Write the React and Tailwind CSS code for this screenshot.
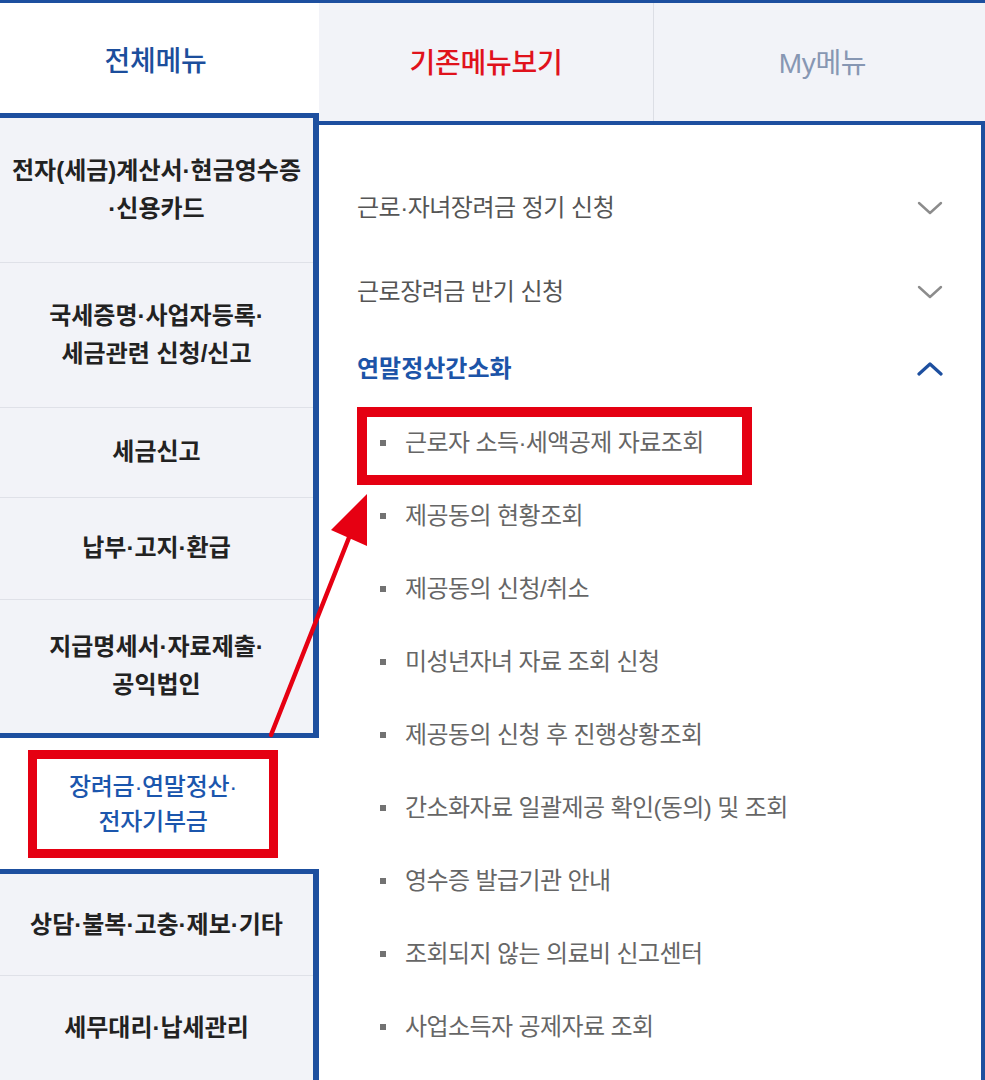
import React from "react";

function LeftItem({ lines, h, last }) {
  return (
    <div
      className={`flex flex-col items-center justify-center text-center text-[24px] font-bold tracking-[0px] leading-[38px] text-[#222222] ${
        last ? "" : "border-b border-[#dfe1e8]"
      } ${h}`}
    >
      {lines.map((l, i) => (
        <div key={i}>{l}</div>
      ))}
    </div>
  );
}

function ChevronDown() {
  return (
    <svg width="26" height="14" viewBox="0 0 26 14" className="shrink-0">
      <polyline points="2,2 13,12 24,2" fill="none" stroke="#8c8c8c" strokeWidth="2.4" strokeLinecap="round" strokeLinejoin="round" />
    </svg>
  );
}

function ChevronUp() {
  return (
    <svg width="26" height="14" viewBox="0 0 26 14" className="shrink-0">
      <polyline points="2,12 13,2 24,12" fill="none" stroke="#1d4f9f" strokeWidth="3.2" strokeLinecap="round" strokeLinejoin="round" />
    </svg>
  );
}

const subItems = [
  "근로자 소득·세액공제 자료조회",
  "제공동의 현황조회",
  "제공동의 신청/취소",
  "미성년자녀 자료 조회 신청",
  "제공동의 신청 후 진행상황조회",
  "간소화자료 일괄제공 확인(동의) 및 조회",
  "영수증 발급기관 안내",
  "조회되지 않는 의료비 신고센터",
  "사업소득자 공제자료 조회",
];

export default function App() {
  return (
    <div className="relative flex w-[985px] h-[1080px] overflow-hidden bg-white border-t-[3px] border-[#1d4f9f] font-['Liberation_Sans','Noto_Sans_CJK_KR',sans-serif]">
      {/* Left column */}
      <div className="flex w-[319px] shrink-0 flex-col">
        <div className="flex h-[110px] items-center justify-center pt-[8px] pr-[8px] text-[28px] font-medium tracking-[-0.3px] text-[#1c4e9c]">
          전체메뉴
        </div>
        <div className="border-t-[5px] border-r-[6px] border-b-[5px] border-[#1d4f9f] bg-[#f2f3f8]">
          <LeftItem h="h-[145px]" lines={["전자(세금)계산서·현금영수증", "·신용카드"]} />
          <LeftItem h="h-[145px]" lines={["국세증명·사업자등록·", "세금관련 신청/신고"]} />
          <LeftItem h="h-[90px]" lines={["세금신고"]} />
          <LeftItem h="h-[102px]" lines={["납부·고지·환급"]} />
          <LeftItem h="h-[133px]" lines={["지급명세서·자료제출·", "공익법인"]} last />
        </div>
        <div className="h-[132px] bg-white pt-[12px] pl-[28px]">
          <div className="flex h-[108px] w-[250px] flex-col items-center justify-center border-[9px] border-[#e50012] text-[24px] font-medium tracking-[-0.3px] leading-[35px] text-[#1b56ad]">
            <div>장려금·연말정산·</div>
            <div>전자기부금</div>
          </div>
        </div>
        <div className="flex-1 border-t-[5px] border-r-[6px] border-[#1d4f9f] bg-[#f2f3f8]">
          <LeftItem h="h-[102px]" lines={["상담·불복·고충·제보·기타"]} />
          <LeftItem h="h-[104px]" lines={["세무대리·납세관리"]} last />
        </div>
      </div>

      {/* Right column */}
      <div className="flex flex-1 flex-col">
        <div className="flex h-[118px] bg-[#f2f3f8]">
          <div className="flex w-[335px] items-center justify-center border-r border-[#dcdee5] pt-[4px] text-[28px] font-medium tracking-[-0.3px] text-[#e0121c]">
            기존메뉴보기
          </div>
          <div className="flex flex-1 items-center justify-center pt-[4px] pl-[6px] text-[28px] tracking-[-0.3px] text-[#8797b3]">
            My메뉴
          </div>
        </div>
        <div className="flex-1 border-t-4 border-r-4 border-[#1d4f9f] bg-white px-[38px] pt-[41px]">
          <div className="flex h-[84px] items-center justify-between text-[24px] tracking-[-0.5px] text-[#555555]">
            <span>근로·자녀장려금 정기 신청</span>
            <ChevronDown />
          </div>
          <div className="flex h-[84px] items-center justify-between text-[24px] tracking-[-0.5px] text-[#555555]">
            <span>근로장려금 반기 신청</span>
            <ChevronDown />
          </div>
          <div className="flex h-[70px] items-center justify-between text-[24px] font-bold tracking-[0px] text-[#1c54a8]">
            <span>연말정산간소화</span>
            <ChevronUp />
          </div>
          <ul className="mt-[2px]">
            {subItems.map((t, i) => (
              <li key={i} className="relative flex h-[73px] items-center gap-[19px] pl-[23px] text-[24px] tracking-[-0.6px] text-[#666666]">
                <span className="h-[6px] w-[6px] shrink-0 bg-[#727272]" />
                <span>{t}</span>
                {i === 0 && (
                  <span className="absolute left-0 top-[1px] h-[78px] w-[395px] border-[10px] border-[#e50012]" />
                )}
              </li>
            ))}
          </ul>
        </div>
      </div>

      {/* Annotation arrow */}
      <svg className="pointer-events-none absolute left-0 top-0" width="985" height="1080" viewBox="0 0 985 1080">
        <line x1="271" y1="732" x2="352" y2="527" stroke="#e60012" strokeWidth="4.5" strokeLinecap="round" />
        <polygon points="367,491 331,527 367,543" fill="#e60012" />
      </svg>
    </div>
  );
}
